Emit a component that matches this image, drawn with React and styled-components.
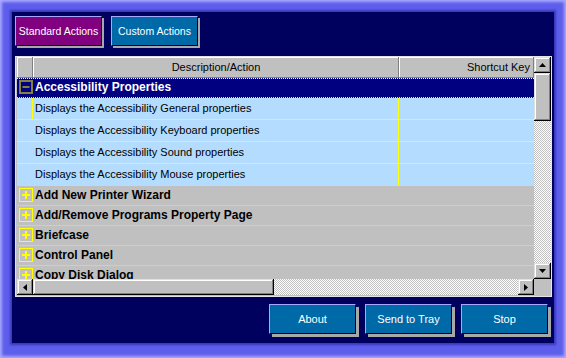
import styled, { createGlobalStyle, css } from "styled-components";

const GlobalStyle = createGlobalStyle`
  html, body {
    margin: 0;
    padding: 0;
  }
  body {
    font-family: "Liberation Sans", Arial, sans-serif;
    background: #5c5ce9;
  }
  * {
    box-sizing: border-box;
  }
`;

const children = [
  "Displays the Accessibility General properties",
  "Displays the Accessibility Keyboard properties",
  "Displays the Accessibility Sound properties",
  "Displays the Accessibility Mouse properties",
];

const groups = [
  "Add New Printer Wizard",
  "Add/Remove Programs Property Page",
  "Briefcase",
  "Control Panel",
  "Copy Disk Dialog",
];

const ToggleBox = ({ open }) =>
  open ? (
    <svg width="14" height="14" viewBox="0 0 14 14">
      <rect x="1" y="1" width="12" height="12" fill="none" stroke="#85803c" strokeWidth="2" />
      <line x1="3.5" y1="7" x2="10.5" y2="7" stroke="#85803c" strokeWidth="2" />
    </svg>
  ) : (
    <svg width="14" height="14" viewBox="0 0 14 14">
      <rect x="0.5" y="0.5" width="13" height="13" fill="none" stroke="#ffff00" />
      <line x1="3" y1="7" x2="11" y2="7" stroke="#ffff00" strokeWidth="2" />
      <line x1="7" y1="3" x2="7" y2="11" stroke="#ffff00" strokeWidth="2" />
    </svg>
  );

const Arrow = ({ dir }) => {
  const points = {
    up: "0,4 7,4 3.5,0",
    down: "0,0 7,0 3.5,4",
    left: "4,0 4,7 0,3.5",
    right: "0,0 0,7 4,3.5",
  }[dir];
  const vertical = dir === "up" || dir === "down";
  return (
    <svg width={vertical ? 7 : 4} height={vertical ? 4 : 7}>
      <polygon points={points} fill="#000" />
    </svg>
  );
};

const App = () => {
  return (
    <Frame>
      <GlobalStyle />
      <Panel>
        <ButtonRow>
          <ActionButton $tone="purple" $shadow={2}>
            Standard Actions
          </ActionButton>
          <ActionButton $shadow={2}>Custom Actions</ActionButton>
        </ButtonRow>

        <TableFrame>
          <Sheet>
            <Header>
              <HeadCell />
              <HeadCell>Description/Action</HeadCell>
              <HeadCell $align="flex-end">Shortcut Key</HeadCell>
            </Header>

            <GroupRow $selected>
              <Selector>
                <ToggleBox open />
              </Selector>
              <GroupLabel>Accessibility Properties</GroupLabel>
            </GroupRow>

            {children.map((text, i) => (
              <ChildRow key={text} $last={i === children.length - 1}>
                <ChildSelector $edge={i === 0} />
                <DescCell>{text}</DescCell>
                <KeyCell />
              </ChildRow>
            ))}

            {groups.map((name) => (
              <GroupRow key={name}>
                <Selector>
                  <ToggleBox />
                </Selector>
                <GroupLabel>{name}</GroupLabel>
              </GroupRow>
            ))}
          </Sheet>

          <VScroll>
            <ScrollButton $size={16}>
              <Arrow dir="up" />
            </ScrollButton>
            <Thumb $size={48} />
            <Track />
            <ScrollButton $size={16}>
              <Arrow dir="down" />
            </ScrollButton>
          </VScroll>

          <HScroll>
            <ScrollButton $size={16}>
              <Arrow dir="left" />
            </ScrollButton>
            <Thumb $size={241} />
            <Track />
            <ScrollButton $size={16}>
              <Arrow dir="right" />
            </ScrollButton>
          </HScroll>

          <Corner />
        </TableFrame>

        <ButtonRow $end>
          <ActionButton $shadow={3} $size={11}>About</ActionButton>
          <ActionButton $shadow={3} $size={11}>Send to Tray</ActionButton>
          <ActionButton $shadow={3} $size={11}>Stop</ActionButton>
        </ButtonRow>
      </Panel>
    </Frame>
  );
};

const Frame = styled.div`
  width: 566px;
  height: 358px;
  padding: 12px 12px 15px 12px;
  background: #5e5eec;
  box-shadow: inset 0 0 3px 2px #a8a8ff;
  overflow: hidden;
`;

const Panel = styled.div`
  height: 100%;
  background: #00005e;
  box-shadow: 0 0 2px 2px #3838bc;
  padding: 4px 2px 0 3px;
  display: flex;
  flex-direction: column;
`;

const ButtonRow = styled.div`
  display: flex;
  gap: 9px;
  justify-content: ${({ $end }) => ($end ? "flex-end" : "flex-start")};
  padding-right: ${({ $end }) => ($end ? "4px" : "0")};
  margin-top: ${({ $end }) => ($end ? "7px" : "0")};
`;

const ActionButton = styled.button`
  width: 87px;
  height: 30px;
  padding: 0 0 1px;
  background: ${({ $tone }) => ($tone === "purple" ? "#800080" : "#006aa8")};
  color: #fff;
  font-family: "Liberation Sans", Arial, sans-serif;
  font-size: ${({ $size }) => $size || 10.5}px;
  white-space: nowrap;
  border: 1px solid;
  border-color: #a8a8ff #000 #000 #a8a8ff;
  box-shadow: ${({ $shadow }) => `${$shadow}px ${$shadow}px 0 #a8a8a8`};
  cursor: pointer;
`;

const TableFrame = styled.div`
  margin-top: 10px;
  width: 537px;
  height: 241px;
  border: 1px solid #e4e4e4;
  padding: 0 0 1px 1px;
  background: #c0c0c0;
  display: grid;
  grid-template-columns: 517px 17px;
  grid-template-rows: 222px 16px;
`;

const Sheet = styled.div`
  overflow: hidden;
  background: #c0c0c0;
`;

const Header = styled.div`
  display: grid;
  grid-template-columns: 16px 366px 135px;
  height: 21px;
`;

const HeadCell = styled.div`
  display: flex;
  align-items: center;
  justify-content: ${({ $align }) => $align || "center"};
  padding: 0 4px 1px;
  font-size: 11px;
  color: #000;
  box-shadow: inset -1px -1px #808080, inset 1px 1px #fff;
`;

const GroupRow = styled.div`
  display: flex;
  align-items: center;
  height: 20px;
  padding-bottom: 2px;
  background: #c0c0c0;
  color: #000;
  border-bottom: 1px solid #a8d8ff;
  font-size: 12px;
  font-weight: bold;
  ${({ $selected }) =>
    $selected &&
    css`
      background: #000080;
      color: #fff;
      border-top: 1px dotted #fff;
      border-bottom: 1px dotted #ffff00;
    `}
`;

const Selector = styled.div`
  width: 16px;
  align-self: stretch;
  display: flex;
  align-items: center;
  justify-content: center;
  padding-left: 1px;
`;

const GroupLabel = styled.span`
  padding-left: 2px;
  white-space: nowrap;
`;

const ChildRow = styled.div`
  display: grid;
  grid-template-columns: 16px 366px 135px;
  height: 22px;
  background: #b4dcff;
  border-bottom: ${({ $last }) => ($last ? "none" : "1px solid #ffff00")};
  font-size: 11px;
  color: #000;
`;

const ChildSelector = styled.div`
  border-right: ${({ $edge }) => ($edge ? "1px solid #ffff00" : "none")};
`;

const DescCell = styled.div`
  display: flex;
  align-items: center;
  padding: 0 0 2px 2px;
  white-space: nowrap;
  border-right: 1px solid #ffff00;
`;

const KeyCell = styled.div``;

const bevel = css`
  background: #c0c0c0;
  box-shadow: inset -1px -1px #000, inset 1px 1px #dfdfdf,
    inset -2px -2px #808080, inset 2px 2px #fff;
`;

const VScroll = styled.div`
  display: flex;
  flex-direction: column;
`;

const HScroll = styled.div`
  display: flex;
`;

const ScrollButton = styled.div`
  ${bevel};
  flex: 0 0 ${({ $size }) => $size}px;
  display: flex;
  align-items: center;
  justify-content: center;
`;

const Thumb = styled.div`
  ${bevel};
  flex: 0 0 ${({ $size }) => $size}px;
`;

const Track = styled.div`
  flex: 1;
  background: repeating-conic-gradient(#c0c0c0 0% 25%, #fff 0% 50%) 0 0 / 2px 2px;
`;

const Corner = styled.div`
  background: #c0c0c0;
`;

export default App;
